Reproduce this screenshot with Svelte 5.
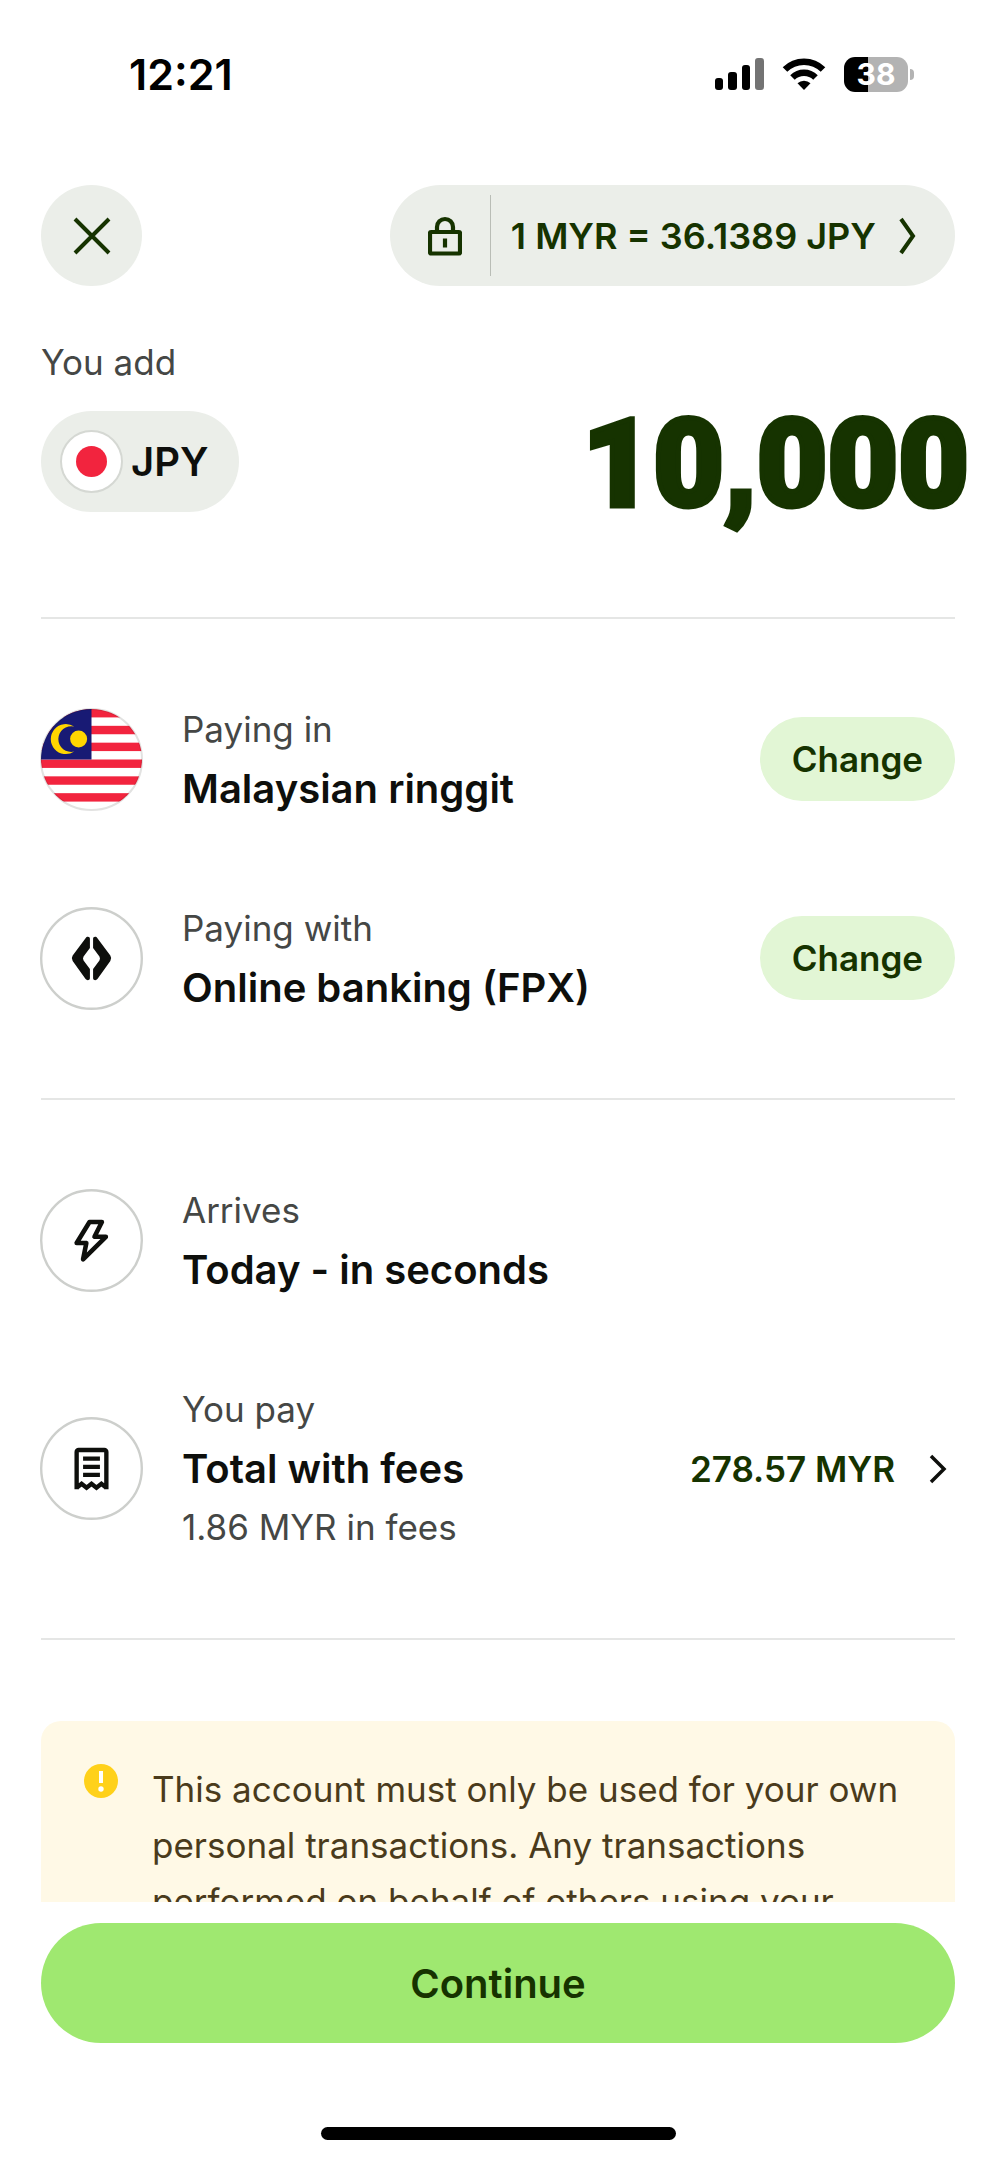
<script lang="ts">
    type Row = {
        icon: string;
        label: string;
        title: string;
        note?: string;
        action?: string;
        amount?: string;
    };

    const rate = '1 MYR = 36.1389 JPY';
    const notice = 'This account must only be used for your own personal transactions. '
        + 'Any transactions performed on behalf of others using your';

    const groups: Row[][] = [
        [
            { icon: 'flag', label: 'Paying in', title: 'Malaysian ringgit', action: 'Change' },
            { icon: 'fpx', label: 'Paying with', title: 'Online banking (FPX)', action: 'Change' },
        ],
        [
            { icon: 'bolt', label: 'Arrives', title: 'Today - in seconds' },
            { icon: 'receipt', label: 'You pay', title: 'Total with fees', note: '1.86 MYR in fees', amount: '278.57 MYR' },
        ],
    ];

    // Red stripes are the even ones, white shows through between them
    const redStripes = [0, 2, 4, 6, 8, 10];
    const stripeHeight = 8.5;

    let amount = $state('10,000');
</script>

<div class="screen">
    <div class="status-bar">
        <span class="time">12:21</span>
        <div class="status-icons">
            <svg width="49" height="32" viewBox="0 0 49 32" aria-hidden="true">
                <rect x="0" y="20" width="8" height="12" rx="3" />
                <rect x="13" y="14" width="9" height="18" rx="3" />
                <rect x="27" y="7" width="8" height="25" rx="3" />
                <rect x="40" y="0" width="9" height="32" rx="3" fill="#737373" />
            </svg>
            <svg width="44" height="32" viewBox="0 0 44 32" aria-hidden="true">
                <path d="M3 11.5a27 27 0 0 1 38 0" fill="none" stroke="#000" stroke-width="6.5" />
                <path d="M10.5 19.5a16.5 16.5 0 0 1 23 0" fill="none" stroke="#000" stroke-width="6.5" />
                <path d="M22 32l-6.5-6.7a9.5 9.5 0 0 1 13 0z" />
            </svg>
            <div class="battery"><span>38</span></div>
        </div>
    </div>

    <main>
        <header>
            <button class="close" aria-label="Close">
                <svg width="38" height="38" viewBox="0 0 38 38" aria-hidden="true">
                    <path d="M2 2l34 34M36 2L2 36" fill="none" stroke="#163300" stroke-width="4" />
                </svg>
            </button>
            <button class="rate">
                <span class="lock">
                    <svg width="34" height="40" viewBox="0 0 34 40" aria-hidden="true">
                        <rect x="2" y="16" width="30" height="21.5" rx="1" fill="none" stroke="#163300" stroke-width="4.2" />
                        <path d="M9 15V11a8 8 0 0 1 16 0v4" fill="none" stroke="#163300" stroke-width="4.2" />
                        <path d="M17 22.5v9" stroke="#163300" stroke-width="4.2" />
                    </svg>
                </span>
                <span class="rate-text">{rate}</span>
                <svg width="18" height="38" viewBox="0 0 18 38" aria-hidden="true">
                    <path d="M2 2l12 17L2 36" fill="none" stroke="#163300" stroke-width="4" />
                </svg>
            </button>
        </header>

        <label class="label" for="amount">You add</label>
        <div class="entry">
            <button class="currency">
                <svg width="63" height="63" viewBox="0 0 63 63" aria-hidden="true">
                    <circle cx="31.5" cy="31.5" r="30.5" fill="#fff" stroke="#d5d8d3" stroke-width="2" />
                    <circle cx="31.5" cy="31.5" r="15.5" fill="#f2243e" />
                </svg>
                JPY
            </button>
            <input id="amount" type="text" inputmode="decimal" bind:value={amount} />
        </div>

        {#each groups as rows}
            <section>
                {#each rows as row}
                    <div class="row">
                        <svg class="icon" width="103" height="103" viewBox="0 0 104 104" aria-hidden="true">
                            {#if row.icon === 'flag'}
                                <clipPath id="disc"><circle cx="52" cy="52" r="51" /></clipPath>
                                <g clip-path="url(#disc)">
                                    <rect width="104" height="104" fill="#fff" />
                                    {#each redStripes as stripe}
                                        <rect y={1 + stripe * stripeHeight} width="104" height={stripeHeight} fill="#f2243e" />
                                    {/each}
                                    <rect width="52" height="52" fill="#181a74" />
                                    <path d="M34.5 18.7A15.2 15.2 0 1 0 34.5 44A13 13 0 1 1 34.5 18.7z" fill="#ffd500" />
                                    <circle cx="39" cy="31.3" r="8.6" fill="#ffd500" />
                                </g>
                                <circle cx="52" cy="52" r="51" fill="none" stroke="#0e0f0c" stroke-opacity=".12" stroke-width="2" />
                            {:else}
                                <circle cx="52" cy="52" r="50.8" fill="#fff" stroke="#cdcfcc" stroke-width="2.4" />
                            {/if}
                            {#if row.icon === 'fpx'}
                                <path d="M48.4 30c1.3 0 2 .7 2 2V41.5l-6.4 8.5a4 4 0 0 0 0 4L50.4 62.5V72c0 2-3 2.8-4.4.8L33 54.5a5 5 0 0 1 0-5.5L46 31.5c.7-1 1.4-1.5 2.4-1.5z" fill="#0e0f0c" />
                                <path d="M55.6 30c-1.3 0-2 .7-2 2V41.5l6.4 8.5a4 4 0 0 1 0 4L53.6 62.5V72c0 2 3 2.8 4.4.8L71 54.5a5 5 0 0 0 0-5.5L58 31.5c-.7-1-1.4-1.5-2.4-1.5z" fill="#0e0f0c" />
                            {:else if row.icon === 'bolt'}
                                <path d="M50 33.3h12.5l-7.5 15h11.5L43.5 71l3.3-16.5H37z" fill="none" stroke="#0e0f0c" stroke-width="4.6" stroke-linejoin="round" />
                            {:else if row.icon === 'receipt'}
                                <path d="M37 73V35.3a2 2 0 0 1 2-2h26a2 2 0 0 1 2 2V73M37 71.5l5-4 5 4 5-4 5 4 5-4 5 4" fill="none" stroke="#0e0f0c" stroke-width="4.4" />
                                <path d="M43.5 42h17M43.5 50.3h17M43.5 58.5h17" fill="none" stroke="#0e0f0c" stroke-width="4.4" />
                            {/if}
                        </svg>
                        <div class="details">
                            <span class="label">{row.label}</span>
                            <strong>{row.title}</strong>
                            {#if row.note}
                                <span class="label">{row.note}</span>
                            {/if}
                        </div>
                        {#if row.action}
                            <button class="change">{row.action}</button>
                        {/if}
                        {#if row.amount}
                            <button class="total">
                                {row.amount}
                                <svg width="18" height="30" viewBox="0 0 18 30" aria-hidden="true">
                                    <path d="M2 2l13 13L2 28" fill="none" stroke="#0e0f0c" stroke-width="3.5" />
                                </svg>
                            </button>
                        {/if}
                    </div>
                {/each}
            </section>
        {/each}

        <section>
            <div class="notice">
                <svg width="34" height="34" viewBox="0 0 34 34" aria-hidden="true">
                    <circle cx="17" cy="17" r="17" fill="#ffd11a" />
                    <path d="M17 7v12" stroke="#fff" stroke-width="4" />
                    <circle cx="17" cy="25" r="2.7" fill="#fff" />
                </svg>
                <p>{notice}</p>
            </div>
        </section>
    </main>

    <footer>
        <button class="continue">Continue</button>
        <div class="home-indicator"></div>
    </footer>
</div>

<style>
    :global(body) {
        margin: 0;
        background: #fff;
    }

    .screen {
        display: flex;
        flex-direction: column;
        height: 100vh;
        color: #0e0f0c;
        font-family: Inter, "Liberation Sans", sans-serif;
        font-size: 35px;
    }

    button {
        border: none;
        padding: 0;
        background: none;
        color: #163300;
        font: inherit;
        font-weight: 600;
        cursor: pointer;
    }

    svg {
        display: block;
        flex: none;
    }

    .status-bar {
        display: flex;
        justify-content: space-between;
        align-items: center;
        height: 148px;
        padding: 0 82px 0 129px;
        color: #000;
    }

    .time {
        font-size: 43px;
        font-weight: 600;
    }

    .status-icons {
        display: flex;
        align-items: center;
        gap: 18px;
    }

    .battery {
        position: relative;
        width: 64px;
        height: 35px;
        margin-right: 6px;
        border-radius: 11px;
        background: linear-gradient(to right, #000 38%, #b3b3b3 38%);
        color: #fff;
        font-size: 30px;
        font-weight: 700;
        line-height: 35px;
        text-align: center;
    }

    .battery::after {
        content: "";
        position: absolute;
        top: 12px;
        right: -6px;
        width: 4px;
        height: 11px;
        border-radius: 0 4px 4px 0;
        background: #b3b3b3;
    }

    main {
        flex: 1;
        min-height: 0;
        overflow: hidden;
        padding: 37px 41px 0;
    }

    header {
        display: flex;
        justify-content: space-between;
        margin-bottom: 47px;
    }

    .close {
        display: grid;
        place-items: center;
        width: 101px;
        height: 101px;
        border-radius: 50%;
        background: #ebeee9;
    }

    .rate {
        display: flex;
        align-items: center;
        height: 101px;
        padding-right: 38px;
        border-radius: 51px;
        background: #ebeee9;
        font-size: 36px;
    }

    .lock {
        display: flex;
        align-items: center;
        height: 81px;
        padding: 0 28px 0 38px;
        border-right: 1px solid #b9bdb6;
    }

    .rate-text {
        padding: 0 23px 0 20px;
    }

    .label {
        color: #454745;
        line-height: 59px;
    }

    .entry {
        display: flex;
        justify-content: space-between;
        align-items: center;
        margin: 19px 0 105px;
    }

    .currency {
        display: flex;
        align-items: center;
        gap: 8px;
        height: 101px;
        padding: 0 30px 0 19px;
        border-radius: 51px;
        background: #ebeee9;
        color: #0e0f0c;
        font-size: 40px;
    }

    /* taller than the row so that the comma's tail is not cut off */
    #amount {
        flex: 1;
        min-width: 0;
        height: 155px;
        margin: -30px -14px -30px 0;
        padding: 6px 0 0;
        border: none;
        outline: none;
        background: none;
        color: #163300;
        font-family: Roboto, Inter, sans-serif;
        font-size: 122px;
        font-weight: 900;
        text-align: right;
        -webkit-text-stroke: 5px #163300;
    }

    section {
        display: flex;
        flex-direction: column;
        gap: 81px;
        padding: 81px 0;
        border-top: 2px solid #e5e6e5;
    }

    .row {
        display: flex;
        align-items: center;
    }

    .icon {
        margin: 0 39px 0 -1px;
    }

    .details {
        display: flex;
        flex: 1;
        flex-direction: column;
    }

    strong {
        font-size: 40px;
        font-weight: 600;
        line-height: 59px;
    }

    .change {
        height: 84px;
        padding: 0 32px;
        border-radius: 42px;
        background: #e2f6d5;
    }

    .total {
        display: flex;
        align-items: center;
        gap: 34px;
        padding-right: 8px;
    }

    .notice {
        display: flex;
        gap: 34px;
        padding: 40px 41px 40px 43px;
        border-radius: 20px;
        background: #fff9e6;
        color: #4a3b1c;
    }

    .notice svg {
        margin-top: 3px;
    }

    .notice p {
        margin: 0;
        line-height: 56px;
    }

    footer {
        padding: 21px 41px 20px;
        background: #fff;
    }

    .continue {
        display: block;
        width: 100%;
        height: 120px;
        border-radius: 60px;
        background: #9fe870;
        font-size: 40px;
    }

    .home-indicator {
        width: 355px;
        height: 13px;
        margin: 84px auto 0;
        border-radius: 7px;
        background: #000;
    }
</style>
